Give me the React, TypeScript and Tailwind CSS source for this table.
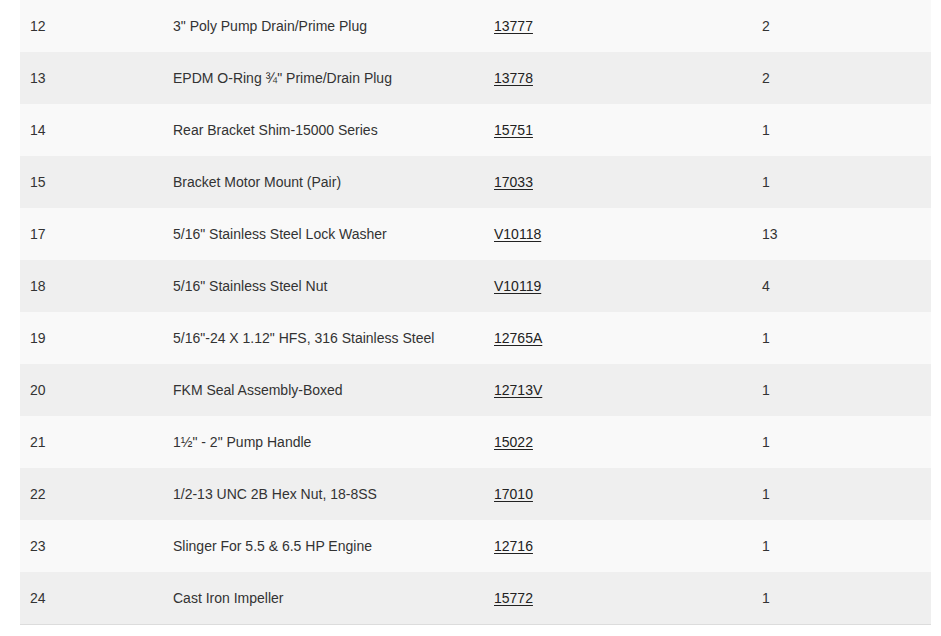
import React from "react";

const parts = [
  { item: "12", desc: "3\" Poly Pump Drain/Prime Plug", part: "13777", qty: "2" },
  { item: "13", desc: "EPDM O-Ring ¾\" Prime/Drain Plug", part: "13778", qty: "2" },
  { item: "14", desc: "Rear Bracket Shim-15000 Series", part: "15751", qty: "1" },
  { item: "15", desc: "Bracket Motor Mount (Pair)", part: "17033", qty: "1" },
  { item: "17", desc: "5/16\" Stainless Steel Lock Washer", part: "V10118", qty: "13" },
  { item: "18", desc: "5/16\" Stainless Steel Nut", part: "V10119", qty: "4" },
  { item: "19", desc: "5/16\"-24 X 1.12\" HFS, 316 Stainless Steel", part: "12765A", qty: "1" },
  { item: "20", desc: "FKM Seal Assembly-Boxed", part: "12713V", qty: "1" },
  { item: "21", desc: "1½\" - 2\" Pump Handle", part: "15022", qty: "1" },
  { item: "22", desc: "1/2-13 UNC 2B Hex Nut, 18-8SS", part: "17010", qty: "1" },
  { item: "23", desc: "Slinger For 5.5 & 6.5 HP Engine", part: "12716", qty: "1" },
  { item: "24", desc: "Cast Iron Impeller", part: "15772", qty: "1" },
];

export default function App() {
  return (
    <div className="min-h-[636px] w-[941px] bg-white pl-5 font-['Liberation_Sans',Arial,sans-serif] text-[14px] text-[#333]">
      <div className="w-[911px] border-b border-[#dcdcdc]">
        {parts.map((p, i) => (
          <div
            key={p.item}
            className={`grid h-[52px] grid-cols-[143px_321px_268px_179px] items-center ${
              i % 2 === 0 ? "bg-[#f9f9f9]" : "bg-[#efefef]"
            }`}
          >
            <div className="pl-[10px]">{p.item}</div>
            <div className="pl-[10px]">{p.desc}</div>
            <div className="pl-[10px]">
              <a href="#" className="text-[#222] underline underline-offset-[2px]">
                {p.part}
              </a>
            </div>
            <div className="pl-[10px]">{p.qty}</div>
          </div>
        ))}
      </div>
    </div>
  );
}
